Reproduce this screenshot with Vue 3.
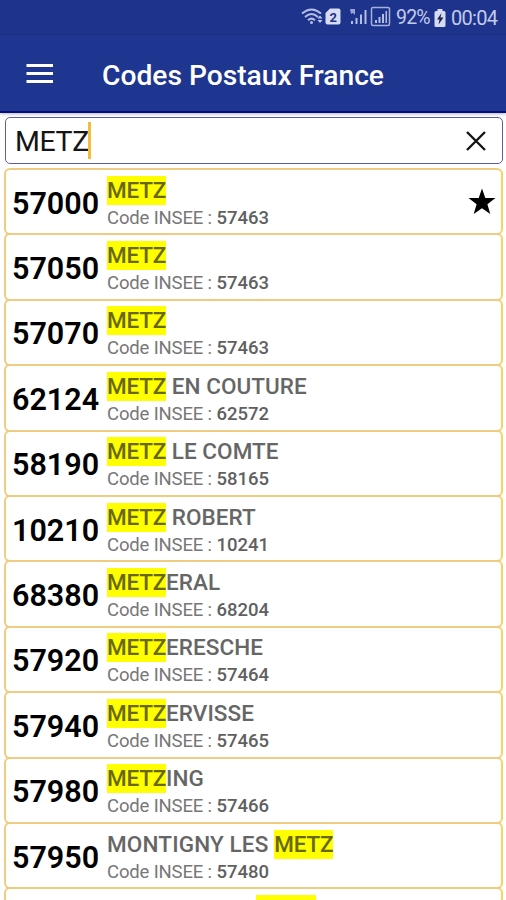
<script setup>
import { ref } from 'vue'

const query = ref('METZ')
const rows = [
  { code: '57000', before: '', after: '', insee: '57463', favorite: true },
  { code: '57050', before: '', after: '', insee: '57463' },
  { code: '57070', before: '', after: '', insee: '57463' },
  { code: '62124', before: '', after: ' EN COUTURE', insee: '62572' },
  { code: '58190', before: '', after: ' LE COMTE', insee: '58165' },
  { code: '10210', before: '', after: ' ROBERT', insee: '10241' },
  { code: '68380', before: '', after: 'ERAL', insee: '68204' },
  { code: '57920', before: '', after: 'ERESCHE', insee: '57464' },
  { code: '57940', before: '', after: 'ERVISSE', insee: '57465' },
  { code: '57980', before: '', after: 'ING', insee: '57466' },
  { code: '57950', before: 'MONTIGNY LES ', after: '', insee: '57480' },
  { code: '57160', before: 'MOULINS LES ', after: '', insee: '57487' },
]
</script>

<template>
  <div class="screen">
    <div class="status">
      <svg class="status-icons" width="92" height="22" viewBox="0 0 92 22">
        <g fill="none" stroke="#b5bee2" stroke-width="2">
          <path d="M2 7.5Q11.5-.5 21 7.5" />
          <path d="M5 11Q11.500 5 18 11" />
          <path d="M8 14.200Q11.500 11 15 14.200" />
        </g>
        <circle cx="11.500" cy="16.500" r="1.500" fill="#b5bee2" />
        <path d="M20 9.500l2.500 3h-5zM20 17l2.500-3h-5z" fill="#c3cbea" />
        <path d="M30 2.500h8.500q2 0 2 2v12q0 2-2 2h-11q-2 0-2-2V7z" fill="#d7dcf2" />
        <text x="33.200" y="15.500" text-anchor="middle" class="sim">2</text>
        <g fill="#b5bee2">
          <path d="M50 3h5v6l-2-2-2 1z" opacity=".8" />
          <path d="M51 15h2v3h-2zM55.500 12h2v6h-2zM60 8.500h2v9.500h-2zM64.500 4h2v14h-2z" />
          <path d="M75 14h2v3h-2zM78.500 11h2v6h-2zM82 8h2v9h-2zM85.500 5h1.500v12h-1.500z" />
        </g>
        <rect x="71.500" y="1.500" width="18" height="18" rx="1.500" fill="none" stroke="#a5b0dc" stroke-width="1.500" />
      </svg>
      <span class="percent">92%</span>
      <svg class="battery" width="12" height="18" viewBox="0 0 12 18">
        <path d="M3.500 0h5v2H10q1.500 0 1.500 1.500v13Q11.500 18 10 18H2Q.5 18 .5 16.500v-13Q.5 2 2 2h1.500z" fill="#d7dcf2" />
        <path d="M7.500 4L3 10.500h2.500L4.500 15.500 9.500 8.500H6.500z" fill="#1d2347" />
      </svg>
      <span class="clock">00:04</span>
    </div>

    <header class="bar">
      <svg width="28" height="22" viewBox="0 0 28 22">
        <path d="M.5 1h26.500v3H.5zM.5 9h26.500v3H.5zM.5 17h26.500v3H.5z" fill="#fff" />
      </svg>
      <h1>Codes Postaux France</h1>
    </header>

    <div class="search">
      <span class="query">{{ query }}</span>
      <span class="caret"></span>
      <svg class="clear" width="22" height="22" viewBox="0 0 22 22">
        <path d="M2 2L20 20M20 2L2 20" fill="none" stroke="#111" stroke-width="2.300" />
      </svg>
    </div>

    <ul class="list">
      <li v-for="row in rows" :key="row.code" class="slot">
        <div class="card">
          <span class="code">{{ row.code }}</span>
          <div class="info">
            <div class="name"><span class="before">{{ row.before }}</span><mark>{{ query }}</mark>{{ row.after }}</div>
            <div class="insee">Code INSEE : <b>{{ row.insee }}</b></div>
          </div>
          <svg v-if="row.favorite" class="star" width="28" height="27" viewBox="0 0 28 27">
            <path d="M14 .5L17.300 10H27.500L19.400 16.200 22.300 26 14 20.200 5.700 26 8.600 16.200.5 10H10.700z" fill="#000" />
          </svg>
        </div>
      </li>
    </ul>
  </div>
</template>

<style>
body {
  margin: 0;
  overflow: hidden;
}
</style>

<style scoped>
.screen {
  width: 506px;
  height: 900px;
  overflow: hidden;
  background: #fff;
  font-family: Roboto, sans-serif;
}
.status {
  height: 35px;
  box-sizing: border-box;
  padding: 0 8px 0 0;
  display: flex;
  align-items: center;
  justify-content: flex-end;
  background: #1d338c;
  color: #c3cbea;
  font-size: 20px;
}
.status-icons {
  margin-right: 4px;
  margin-top: -1px;
}
.sim {
  font-size: 13px;
  font-weight: 700;
  fill: #1d338c;
}
.percent,
.clock {
  line-height: 34px;
  white-space: nowrap;
}
.percent {
  width: 36px;
  font-size: 19.500px;
  letter-spacing: -0.8px;
}
.battery {
  margin: 0 5px 0 2px;
}
.clock {
  width: 47px;
  font-size: 20px;
  letter-spacing: -0.7px;
}
.bar {
  height: 78px;
  box-sizing: border-box;
  display: flex;
  align-items: center;
  padding: 5px 0 0 26px;
  background: #1e368f;
  border-bottom: 2px solid #060c80;
  box-shadow: 0 1px 3px rgba(0, 0, 40, 0.3);
}
.bar svg {
  margin-top: -4px;
}
h1 {
  margin: 0 0 0 48px;
  color: #fff;
  font-size: 28.200px;
  line-height: 36px;
  font-weight: 500;
  white-space: nowrap;
}
.search {
  height: 47px;
  box-sizing: border-box;
  margin: 4px 3px 0 5px;
  padding: 0 15px 0 9px;
  display: flex;
  align-items: center;
  border: 1.500px solid #5661a8;
  border-radius: 5px;
  background: #fff;
}
.query {
  width: 73px;
  padding-top: 2px;
  color: #151515;
  font-size: 28.500px;
  line-height: 44px;
  letter-spacing: -0.4px;
}
.caret {
  width: 3px;
  height: 37px;
  background: #f3bd39;
}
.clear {
  margin-left: auto;
}
.list {
  list-style: none;
  margin: 4px 0 0;
  padding: 0 3px 0 4px;
}
.slot {
  height: 65.400px;
}
.card {
  height: 67.400px;
  box-sizing: border-box;
  display: flex;
  align-items: center;
  padding: 0 5px 0 6px;
  border: 2px solid #efcc82;
  border-right-color: #f3d65c;
  border-radius: 6px;
}
.code {
  width: 95px;
  padding-top: 4px;
  color: #000;
  font-size: 30.500px;
  line-height: 36px;
  font-weight: 600;
}
.info {
  padding-top: 2px;
  color: #666;
  white-space: nowrap;
}
.name {
  font-size: 22.500px;
  line-height: 29px;
  font-weight: 500;
  white-space: pre;
  letter-spacing: 0.05px;
}
.before {
  letter-spacing: 0.15px;
}
mark {
  display: inline-block;
  background: #ff0;
  color: #68680a;
  letter-spacing: -0.2px;
}
.insee {
  padding-top: 1px;
  margin-bottom: -1px;
  font-size: 18.500px;
  line-height: 25px;
  color: #777;
  letter-spacing: -0.15px;
}
b {
  font-weight: 500;
  color: #606060;
  letter-spacing: 0;
}
.star {
  margin-left: auto;
}
</style>
